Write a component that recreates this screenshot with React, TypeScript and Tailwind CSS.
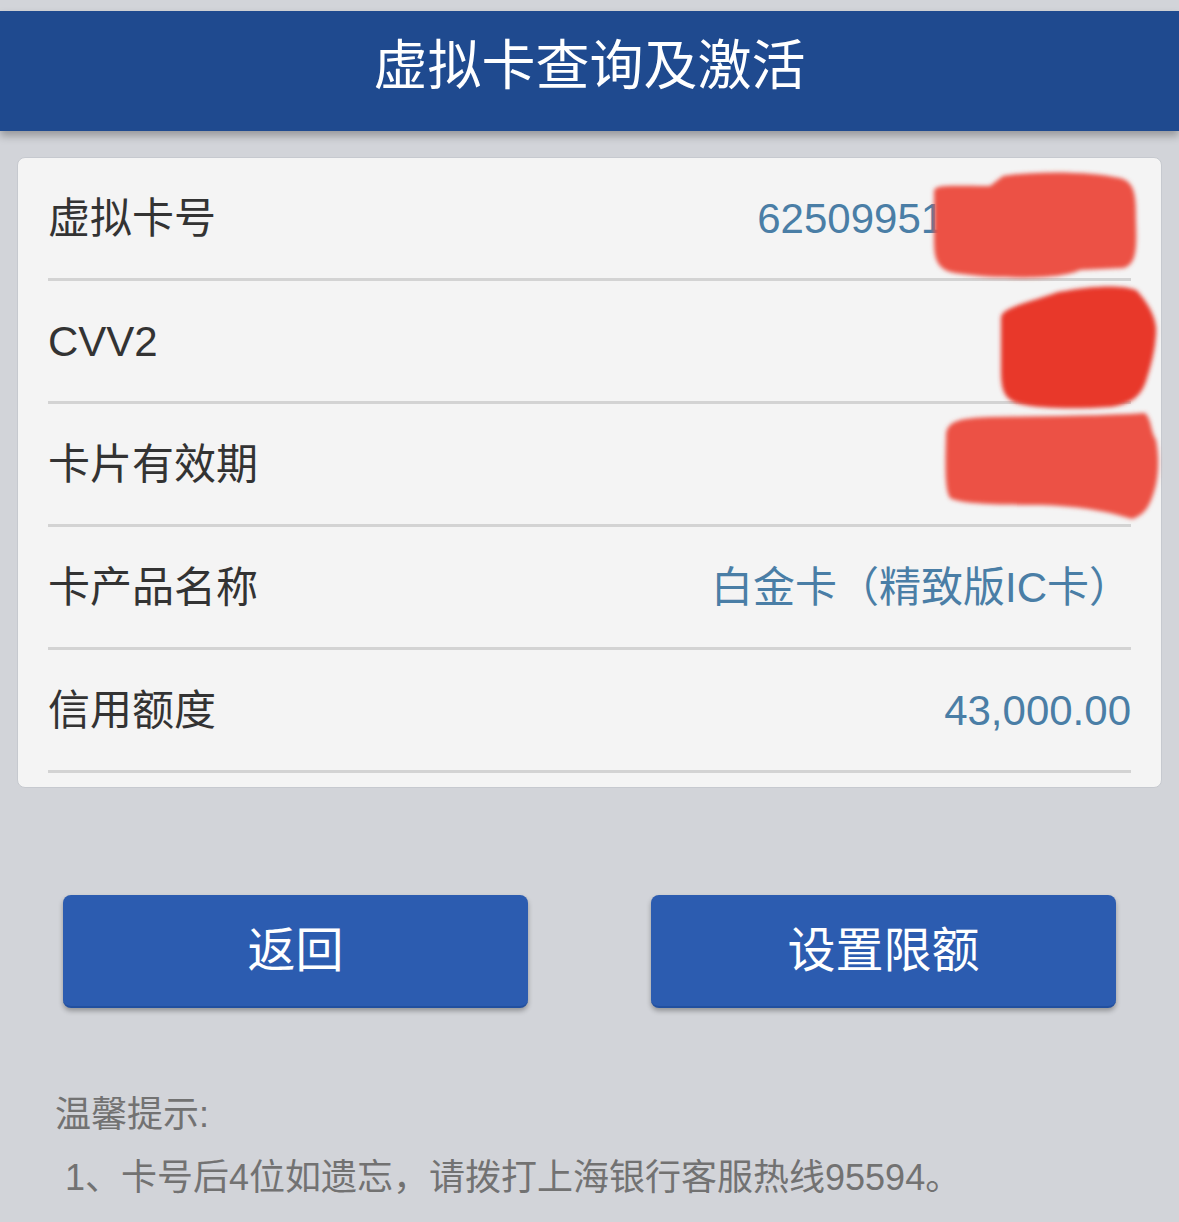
import React from "react";

type Row = { label: string; value?: string; hidden?: string };

const rows: Row[] = [
  { label: "虚拟卡号", value: "62509951", hidden: "00000000" },
  { label: "CVV2" },
  { label: "卡片有效期" },
  { label: "卡产品名称", value: "白金卡（精致版IC卡）" },
  { label: "信用额度", value: "43,000.00" },
];

// hand-drawn red marker blobs covering private data
const Redactions = () => (
  <svg
    className="absolute left-0 top-0 pointer-events-none"
    width="1179"
    height="1222"
    viewBox="0 0 1179 1222"
  >
    <defs>
      <filter id="soft" x="-10%" y="-10%" width="120%" height="120%">
        <feGaussianBlur stdDeviation="2.2" />
      </filter>
    </defs>
    <g filter="url(#soft)">
      <path
        d="M934 192 C933 184 950 186 990 186 L1003 176 C1040 170 1095 172 1120 178 C1136 182 1136 198 1136 222 C1137 250 1136 264 1124 268 L1080 270 C1060 280 1000 279 962 274 C938 272 934 262 934 240 Z"
        fill="#ec5145"
      />
      <path
        d="M1001 318 C1000 308 1030 302 1058 292 C1090 286 1120 284 1136 290 C1146 300 1158 318 1156 334 C1155 350 1152 362 1147 378 C1142 396 1132 404 1110 407 C1080 409 1040 409 1020 404 C1004 400 1001 390 1001 370 Z"
        fill="#e8382a"
      />
      <path
        d="M946 436 C946 420 962 418 990 417 C1040 416 1100 416 1145 413 C1152 420 1150 430 1156 440 C1160 460 1158 480 1154 492 C1150 505 1145 515 1132 519 C1110 512 1080 506 1040 505 C1000 505 960 504 950 498 C945 490 945 470 946 436 Z"
        fill="#ec5145"
      />
    </g>
  </svg>
);

export default function App() {
  return (
    <div
      className="relative min-h-[1222px] bg-[#d2d4d9] pt-[11px]"
      style={{ fontFamily: '"Liberation Sans", "Noto Sans CJK SC", sans-serif' }}
    >
      {/* title bar */}
      <div className="relative z-10 flex h-[120px] items-center justify-center bg-[#1f4a8f] pb-[10px] text-[54px] text-white shadow-[0_5px_8px_rgba(0,0,0,0.28)]">
        虚拟卡查询及激活
      </div>

      {/* card info */}
      <div className="mx-[17px] mt-[26px] rounded-[8px] border border-[#c6c9cf] bg-[#f4f4f4] px-[30px] pb-[14px]">
        {rows.map((row) => (
          <div
            key={row.label}
            className="flex h-[123px] items-center justify-between border-b-[3px] border-[#d3d3d3]"
          >
            <span className="text-[42px] text-[#333333]">{row.label}</span>
            {row.value && (
              <span className="text-[42px] text-[#4a7ea6]">
                {row.value}
                {row.hidden && <span className="invisible">{row.hidden}</span>}
              </span>
            )}
          </div>
        ))}
      </div>

      {/* actions */}
      <div className="mt-[107px] flex justify-between px-[63px]">
        <button className="h-[113px] w-[465px] rounded-[8px] border-b-2 border-[#22509f] bg-[#2c5cb0] text-[48px] text-white shadow-[0_3px_5px_rgba(0,0,0,0.3)]">
          返回
        </button>
        <button className="h-[113px] w-[465px] rounded-[8px] border-b-2 border-[#22509f] bg-[#2c5cb0] text-[48px] text-white shadow-[0_3px_5px_rgba(0,0,0,0.3)]">
          设置限额
        </button>
      </div>

      {/* tips */}
      <div className="mt-[75px] px-[55px] text-[36px] leading-[63px] text-[#727272]">
        <p>温馨提示:</p>
        <p className="pl-[10px]">1、卡号后4位如遗忘，请拨打上海银行客服热线95594。</p>
      </div>

      <Redactions />
    </div>
  );
}
